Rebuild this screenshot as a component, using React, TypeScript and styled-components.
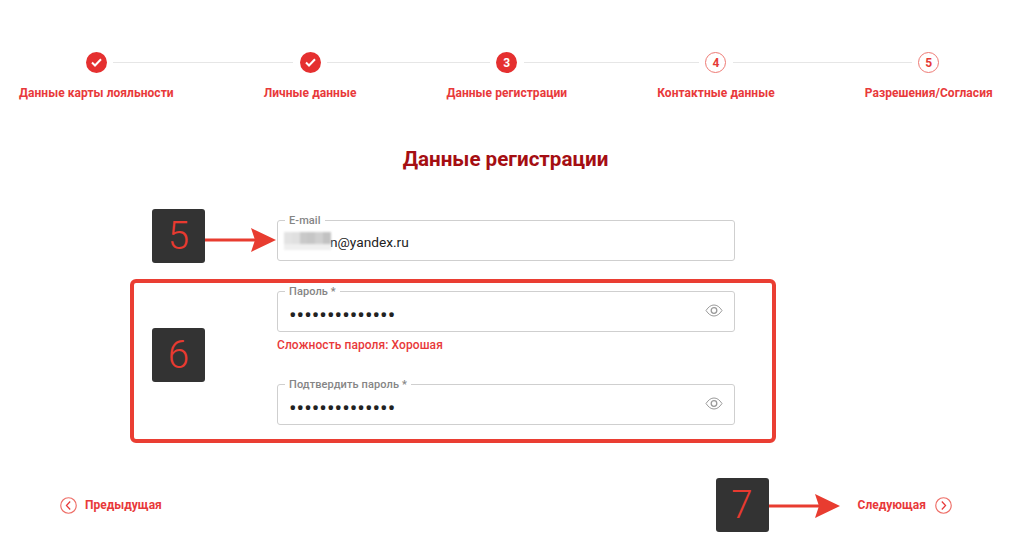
import React from "react";
import styled, { createGlobalStyle } from "styled-components";

const GlobalStyle = createGlobalStyle`
  html, body {
    margin: 0;
    padding: 0;
    background: #fff;
    overflow: hidden;
    font-family: Roboto, "Liberation Sans", sans-serif;
  }
`;

const Page = styled.div`
  width: 1024px;
  height: 541px;
  overflow: hidden;
  padding-top: 52px;
  box-sizing: border-box;
`;

const Stepper = styled.ol`
  display: flex;
  list-style: none;
  margin: 0 0 0 -26px;
  padding: 0;
  width: max-content;
`;

const Step = styled.li`
  display: flex;
  flex-direction: column;
  align-items: center;
`;

const StepHead = styled.div`
  display: flex;
  align-items: center;
  align-self: stretch;
  height: 21px;
`;

const Connector = styled.span<{ $hidden?: boolean }>`
  flex: 1;
  height: 1px;
  background: ${(p) => (p.$hidden ? "transparent" : "#e6e6e6")};
`;

const StepCircle = styled.span<{ $active: boolean }>`
  width: 21px;
  height: 21px;
  box-sizing: border-box;
  margin: 0 6.5px;
  border-radius: 50%;
  display: flex;
  align-items: center;
  justify-content: center;
  font-size: 12px;
  font-weight: 700;
  color: ${(p) => (p.$active ? "#fff" : "#e53a36")};
  background: ${(p) => (p.$active ? "#e53030" : "#fff")};
  border: ${(p) => (p.$active ? "none" : "1.5px solid #ee7a74")};
`;

const StepLabel = styled.span`
  margin-top: 12px;
  padding: 0 45px;
  font-size: 12px;
  letter-spacing: 0.05px;
  line-height: 16px;
  font-weight: 700;
  color: #e8393a;
  white-space: nowrap;
`;

const Title = styled.h1`
  margin: 44px 0 0;
  width: 1011px;
  text-align: center;
  font-size: 20.6px;
  line-height: 28px;
  font-weight: 700;
  color: #a50e12;
`;

const EmailRow = styled.div`
  display: flex;
  margin: 36px 0 0 152px;
`;

const Badge = styled.div`
  flex: none;
  width: 53px;
  height: 54px;
  border-radius: 3px;
  background: #333;
  color: #e83a30;
  font-family: Roboto, "Liberation Sans", sans-serif;
  font-weight: 350;
  font-size: 38.5px;
  line-height: 54px;
  text-align: center;
`;

const RaisedBadge = styled(Badge)`
  margin-bottom: 7px;
`;

const ArrowIcon = styled.svg<{ $top: number }>`
  flex: none;
  display: block;
  width: 72px;
  height: 26px;
  margin-top: ${(p) => p.$top}px;
`;

const Field = styled.div<{ $top?: number }>`
  position: relative;
  flex: none;
  width: 458px;
  height: 41px;
  margin-top: ${(p) => p.$top ?? 0}px;
  box-sizing: border-box;
  border: 1px solid #cfcfcf;
  border-radius: 3px;
`;

const FieldLabel = styled.label`
  position: absolute;
  top: -7px;
  left: 7px;
  padding: 0 4px;
  background: #fff;
  font-size: 11px;
  letter-spacing: 0.1px;
  line-height: 13px;
  font-weight: 500;
  color: #858585;
`;

const Input = styled.input<{ $indent?: number; $secret?: boolean }>`
  display: block;
  width: 100%;
  height: 100%;
  box-sizing: border-box;
  border: 0;
  outline: 0;
  background: transparent;
  padding: ${(p) => (p.$secret ? 6 : 2)}px 40px 0 ${(p) => p.$indent ?? 11}px;
  font-family: Roboto, "Liberation Sans", sans-serif;
  font-size: ${(p) => (p.$secret ? 22.5 : 13.7)}px;
  color: #222;
`;

const BlurredName = styled.span`
  position: absolute;
  left: 6px;
  top: 11px;
  width: 47px;
  height: 18px;
  display: flex;
  filter: blur(1px);
`;

const BlurCell = styled.i<{ $shade: string }>`
  flex: 1;
  background: linear-gradient(${(p) => p.$shade} 68%, #efefef 68%);
`;

const EyeIcon = styled.svg`
  position: absolute;
  right: 11px;
  top: 12px;
  width: 18px;
  height: 13px;
`;

const PasswordBox = styled.section`
  display: flex;
  align-items: center;
  width: 646px;
  height: 164px;
  box-sizing: border-box;
  margin: 16px 0 0 130px;
  border: 4px solid #ea3e33;
  border-radius: 6px;
  padding: 0 0 6px 18px;
`;

const PasswordFields = styled.div`
  margin-left: 72px;
  display: flex;
  flex-direction: column;
`;

const Strength = styled.div`
  margin-top: 5px;
  height: 47px;
  font-size: 12px;
  letter-spacing: 0.08px;
  line-height: 16px;
  font-weight: 500;
  color: #e8393a;
`;

const Footer = styled.footer`
  display: flex;
  justify-content: space-between;
  margin-top: 35px;
  padding: 0 72px 0 60px;
`;

const NavLink = styled.a`
  display: flex;
  align-items: center;
  gap: 8px;
  height: 54px;
  font-size: 12px;
  font-weight: 700;
  color: #e8393a;
  cursor: pointer;
`;

const NavIcon = styled.svg`
  width: 17px;
  height: 17px;
  display: block;
`;

const NextGroup = styled.div`
  display: flex;
`;

const NextLink = styled(NavLink)`
  margin-left: 17px;
  gap: 9px;
`;

const steps = [
  { label: "Данные карты лояльности", done: true, active: true },
  { label: "Личные данные", done: true, active: true },
  { label: "Данные регистрации", done: false, active: true },
  { label: "Контактные данные", done: false, active: false },
  { label: "Разрешения/Согласия", done: false, active: false },
];

const blurShades = ["#e3e3e3", "#e0e0e0", "#c9c9c9", "#c6c6c6", "#cfcfcf", "#c2c2c2"];

const Arrow = ({ top }: { top: number }) => (
  <ArrowIcon $top={top} viewBox="0 0 72 26">
    <rect x="0" y="11.5" width="50" height="3" fill="#e83c30" />
    <path d="M46 1 L71 13 L46 25 L50 13 Z" fill="#e83c30" />
  </ArrowIcon>
);

const Eye = () => (
  <EyeIcon viewBox="0 0 18 13" fill="none" stroke="#9a9a9a">
    <path d="M1 6.5 C3.5 2.8 6 1 9 1 C12 1 14.5 2.8 17 6.5 C14.5 10.2 12 12 9 12 C6 12 3.5 10.2 1 6.5 Z" strokeWidth="1" />
    <circle cx="9" cy="6.5" r="2.8" strokeWidth="1.3" />
  </EyeIcon>
);

const App = () => {
  return (
    <Page>
      <GlobalStyle />
      <Stepper>
        {steps.map((step, i) => (
          <Step key={step.label}>
            <StepHead>
              <Connector $hidden={i === 0} />
              <StepCircle $active={step.active}>
                {step.done ? (
                  <svg width="11" height="9" viewBox="0 0 11 9" fill="none" stroke="#fff" strokeWidth="2">
                    <path d="M1 4.5 L4 7.5 L10 1.2" />
                  </svg>
                ) : (
                  i + 1
                )}
              </StepCircle>
              <Connector $hidden={i === steps.length - 1} />
            </StepHead>
            <StepLabel>{step.label}</StepLabel>
          </Step>
        ))}
      </Stepper>

      <Title>Данные регистрации</Title>

      <EmailRow>
        <Badge>5</Badge>
        <Arrow top={18} />
        <Field $top={11}>
          <FieldLabel>E-mail</FieldLabel>
          <BlurredName>
            {blurShades.map((shade, i) => (
              <BlurCell key={i} $shade={shade} />
            ))}
          </BlurredName>
          <Input type="text" readOnly value="n@yandex.ru" $indent={52} />
        </Field>
      </EmailRow>

      <PasswordBox>
        <RaisedBadge>6</RaisedBadge>
        <PasswordFields>
          <Field>
            <FieldLabel>Пароль *</FieldLabel>
            <Input type="password" readOnly value="12345678901234" $secret />
            <Eye />
          </Field>
          <Strength>Сложность пароля: Хорошая</Strength>
          <Field>
            <FieldLabel>Подтвердить пароль *</FieldLabel>
            <Input type="password" readOnly value="12345678901234" $secret />
            <Eye />
          </Field>
        </PasswordFields>
      </PasswordBox>

      <Footer>
        <NavLink>
          <NavIcon viewBox="0 0 18 18" fill="none">
            <circle cx="9" cy="9" r="8.2" stroke="#ee6d66" strokeWidth="1.2" />
            <path d="M10.8 4.8 L6.8 9 L10.8 13.2" stroke="#e8393a" strokeWidth="1.3" />
          </NavIcon>
          Предыдущая
        </NavLink>
        <NextGroup>
          <Badge>7</Badge>
          <Arrow top={15} />
          <NextLink>
            Следующая
            <NavIcon viewBox="0 0 18 18" fill="none">
              <circle cx="9" cy="9" r="8.2" stroke="#ee6d66" strokeWidth="1.2" />
              <path d="M7.2 4.8 L11.2 9 L7.2 13.2" stroke="#e8393a" strokeWidth="1.3" />
            </NavIcon>
          </NextLink>
        </NextGroup>
      </Footer>
    </Page>
  );
};

export default App;
